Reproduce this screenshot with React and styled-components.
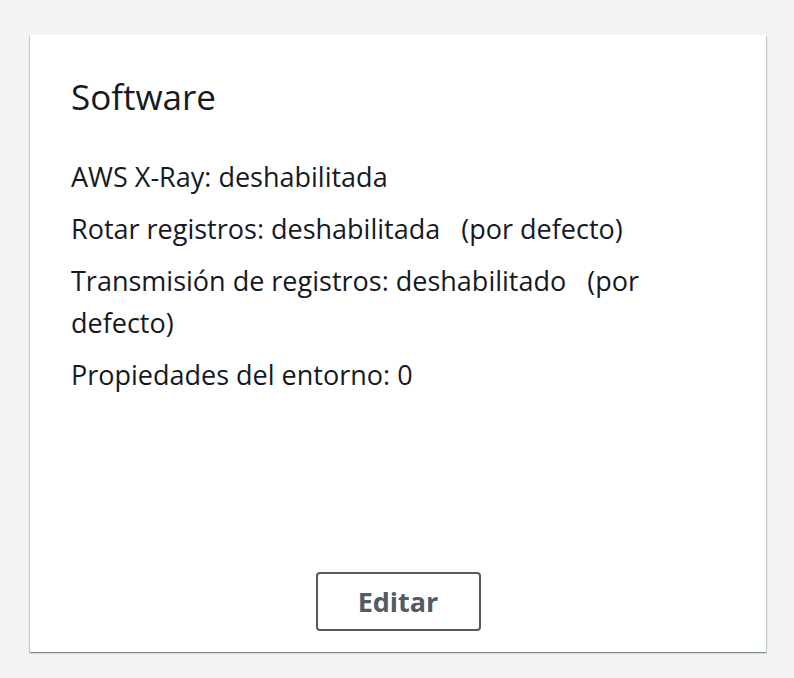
import styled, { createGlobalStyle } from "styled-components"

const GlobalStyle = createGlobalStyle`
	body {
		margin: 0;
		background: #f2f3f3;
		font-family: "Open Sans", "Noto Sans", sans-serif;
		color: #16191f;
	}
`

const Page = styled.div`
	padding: 35px 28px 26px 30px;
`

const Card = styled.section`
	background: #fff;
	height: 617px;
	box-sizing: border-box;
	padding: 40px 41px 21px;
	display: flex;
	flex-direction: column;
	box-shadow: 0 1px 1px 0 rgba(0, 28, 36, 0.3), 1px 1px 1px 0 rgba(0, 28, 36, 0.15), -1px 1px 1px 0 rgba(0, 28, 36, 0.15);
`

const Heading = styled.h2`
	margin: 0 0 37px;
	font-size: 35px;
	font-weight: 400;
	line-height: 44px;
`

const Item = styled.div`
	font-size: 27px;
	line-height: 42px;
	margin-bottom: 10px;
`

const Footer = styled.div`
	margin-top: auto;
	display: flex;
	justify-content: center;
`

const Button = styled.button`
	width: 165px;
	height: 59px;
	background: #fff;
	border: 2px solid #545b64;
	border-radius: 4px;
	color: #545b64;
	font-family: inherit;
	font-size: 27px;
	font-weight: 700;
	cursor: pointer;
`

const App = () => {
	return (
		<Page>
			<GlobalStyle />
			<Card>
				<Heading>Software</Heading>
				<Item>AWS X-Ray: deshabilitada</Item>
				<Item>Rotar registros: deshabilitada{"\u00a0\u00a0 "}(por defecto)</Item>
				<Item>Transmisión de registros: deshabilitado{"\u00a0\u00a0 "}(por defecto)</Item>
				<Item>Propiedades del entorno: 0</Item>
				<Footer>
					<Button>Editar</Button>
				</Footer>
			</Card>
		</Page>
	)
}

export default App
